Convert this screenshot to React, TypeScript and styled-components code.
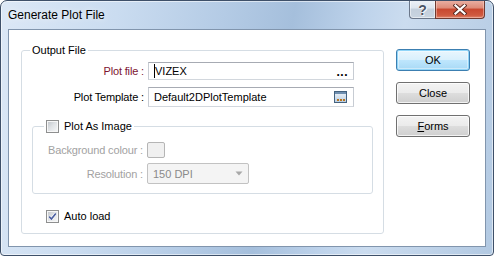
import React from "react";
import styled, { createGlobalStyle, css } from "styled-components";

const Global = createGlobalStyle`
  html, body { margin: 0; padding: 0; background: #ffffff; }
  body { font-family: "Liberation Sans", Arial, sans-serif; font-size: 11px; color: #000; }
  * { box-sizing: border-box; }
`;

const Window = styled.div`
  width: 494px;
  height: 256px;
  border: 1px solid #3e5069;
  border-radius: 7px 7px 4px 4px;
  background: linear-gradient(100deg, #dce8f6 0%, #cadcf0 22%, #b4cbe5 42%, #a5bfdc 55%, #bed3eb 68%, #cbdcef 76%, #b2c9e2 100%);
  box-shadow: inset 0 0 0 1px rgba(255, 255, 255, 0.55);
  display: flex;
  flex-direction: column;
  overflow: hidden;
`;

const TitleBar = styled.div`
  height: 28px;
  flex: none;
  display: flex;
  align-items: flex-start;
  padding: 0 8px 0 7px;
`;

const TitleText = styled.div`
  flex: 1;
  margin-top: 7px;
  font-size: 12px;
  line-height: 14px;
  color: #000;
  text-shadow: 0 0 6px rgba(255, 255, 255, 0.9);
`;

const CaptionButtons = styled.div`
  display: flex;
  height: 19px;
  margin-top: -1px;
`;

const CaptionButton = styled.div<{ $kind: "help" | "close" }>`
  height: 19px;
  display: flex;
  align-items: center;
  justify-content: center;
  border: 1px solid;
  border-top: none;
  ${(p) =>
    p.$kind === "help"
      ? css`
          width: 26px;
          border-color: #6b778a;
          border-right: none;
          border-radius: 0 0 0 4px;
          background: linear-gradient(to bottom, #eef2f7 0%, #dde5ee 45%, #c3cfdc 50%, #c9d4e0 100%);
          box-shadow: inset 0 0 0 1px rgba(255, 255, 255, 0.5);
        `
      : css`
          width: 50px;
          border-color: #6e3a31;
          border-radius: 0 0 4px 0;
          background: linear-gradient(to bottom, #eab2a6 0%, #dd8a77 45%, #c8472f 50%, #cf5a40 85%, #e0866d 100%);
          box-shadow: inset 0 0 0 1px rgba(255, 220, 210, 0.45);
        `}
`;

const HelpGlyph = styled.span`
  font-family: "Liberation Sans", Arial, sans-serif;
  font-weight: bold;
  font-size: 14px;
  line-height: 14px;
  color: #4b5565;
  text-shadow: 0 0 1px #fff, 0 0 1px #fff, 1px 1px 0 rgba(255, 255, 255, 0.8);
  margin-top: 1px;
`;

const Client = styled.div`
  flex: 1;
  margin: 0 7px 8px 7px;
  background: #ffffff;
  border: 1px solid #8195ad;
  display: flex;
  align-items: flex-start;
  padding: 13px 0 0 12px;
`;

const Group = styled.fieldset<{ $w: number; $h: number }>`
  margin: 0;
  padding: 0;
  min-width: 0;
  width: ${(p) => p.$w}px;
  height: ${(p) => p.$h}px;
  border: 1px solid #d5dde4;
  border-radius: 3px;
  flex: none;
`;

const Legend = styled.legend<{ $offset: number }>`
  margin-left: ${(p) => p.$offset}px;
  padding: 0 2px;
  height: 15px;
`;

const LegendInner = styled.span`
  display: flex;
  align-items: center;
  gap: 5px;
  height: 15px;
  line-height: 15px;
  font-size: 11px;
  color: #000;
`;

const GroupBody = styled.div<{ $pt: number }>`
  display: flex;
  flex-direction: column;
  padding-top: ${(p) => p.$pt}px;
`;

const Row = styled.div<{ $label: number; $gapTop?: number }>`
  display: grid;
  grid-template-columns: ${(p) => p.$label}px auto;
  column-gap: 4px;
  align-items: center;
  margin-top: ${(p) => p.$gapTop ?? 0}px;
`;

const Label = styled.span<{ $tone?: "normal" | "accent" | "disabled" }>`
  text-align: right;
  white-space: nowrap;
  font-size: 11px;
  letter-spacing: -0.15px;
  color: ${(p) => (p.$tone === "accent" ? "#7d1530" : p.$tone === "disabled" ? "#a2a2a2" : "#000")};
`;

const TextBox = styled.div<{ $h: number }>`
  width: 206px;
  height: ${(p) => p.$h}px;
  border: 1px solid #abb0b8;
  border-color: #a7abb3 #c7ccd3 #d2d7dd #c7ccd3;
  display: flex;
  align-items: center;
  padding: 0 4px 0 5px;
  font-size: 11px;
  color: #000;
  background: #fff;
`;

const Value = styled.span`
  flex: 1;
  display: flex;
  align-items: center;
  white-space: nowrap;
`;

const Caret = styled.span`
  display: inline-block;
  width: 1px;
  height: 14px;
  background: #000;
`;

const Ellipsis = styled.span`
  font-weight: bold;
  font-size: 12px;
  line-height: 12px;
  letter-spacing: 0.5px;
  margin-top: 2px;
  margin-right: 1px;
`;

const Swatch = styled.div`
  width: 18px;
  height: 16px;
  border: 1px solid #b5b5b5;
  border-radius: 2px;
  background: #f0f0f0;
`;

const Combo = styled.div`
  width: 102px;
  height: 21px;
  border: 1px solid #c2c2c2;
  border-radius: 2px;
  background: #f4f4f4;
  display: flex;
  align-items: center;
  justify-content: space-between;
  padding: 0 5px 0 5px;
  font-size: 11px;
  color: #8a8a8a;
`;

const SubGroupWrap = styled.div`
  margin: 12px 0 0 10px;
`;

const CheckRow = styled.label`
  display: flex;
  align-items: center;
  gap: 5px;
  margin: 16px 0 0 24px;
  font-size: 11px;
  line-height: 13px;
  color: #000;
`;

const CheckBox = styled.span`
  width: 13px;
  height: 13px;
  flex: none;
  border: 1px solid #8e8f8f;
  padding: 1px;
  background: linear-gradient(135deg, #c4c8cd 0%, #dfe2e5 45%, #f4f5f6 100%) content-box, #f7f7f7;
  display: flex;
  align-items: center;
  justify-content: center;
`;

const ButtonColumn = styled.div`
  display: flex;
  flex-direction: column;
  gap: 11px;
  margin: 6px 0 0 12px;
`;

const Button = styled.div<{ $default?: boolean }>`
  width: 74px;
  height: 22px;
  border: 1px solid #707070;
  border-radius: 3px;
  display: flex;
  align-items: center;
  justify-content: center;
  font-size: 11px;
  color: #000;
  background: linear-gradient(to bottom, #f3f3f3 0%, #ebebeb 48%, #dddddd 52%, #cfcfcf 100%);
  box-shadow: inset 0 0 0 1px rgba(255, 255, 255, 0.75);
  ${(p) =>
    p.$default &&
    css`
      border-color: #3c7fb1;
      background: linear-gradient(to bottom, #eaf6fd 0%, #d9f0fc 48%, #bee6fd 52%, #a7d9f5 100%);
      box-shadow: inset 0 0 0 1px #90d5f8, inset 0 0 0 2px rgba(255, 255, 255, 0.4);
    `}
`;

const Underline = styled.span`
  text-decoration: underline;
`;

function Check() {
  return (
    <svg width="9" height="9" viewBox="0 0 9 9">
      <path d="M1.2 4.6 L3.4 7 L7.8 1.4" fill="none" stroke="#ffffff" strokeWidth="2.6" strokeLinejoin="round" />
      <path d="M1.2 4.6 L3.4 7 L7.8 1.4" fill="none" stroke="#4a5ea0" strokeWidth="1.6" />
    </svg>
  );
}

function BrowseIcon() {
  return (
    <svg width="13" height="12" viewBox="0 0 13 12" style={{ marginRight: 2 }}>
      <defs>
        <linearGradient id="bi" x1="0" y1="0" x2="0" y2="1">
          <stop offset="0" stopColor="#f2f6fa" />
          <stop offset="1" stopColor="#b7cde3" />
        </linearGradient>
      </defs>
      <rect x="0.5" y="0.5" width="12" height="11" fill="url(#bi)" stroke="#44627f" />
      <rect x="1" y="1" width="11" height="2" fill="#6f8fb0" />
      <rect x="3" y="8" width="2" height="2" fill="#b8741e" />
      <rect x="6" y="8" width="2" height="2" fill="#b8741e" />
      <rect x="9" y="8" width="2" height="2" fill="#b8741e" />
    </svg>
  );
}

function CloseGlyph() {
  return (
    <svg width="14" height="11" viewBox="0 0 14 11">
      <path d="M2.5 1.5 L11.5 9.5 M11.5 1.5 L2.5 9.5" stroke="#5a2a22" strokeWidth="4" strokeLinecap="square" />
      <path d="M2.5 1.5 L11.5 9.5 M11.5 1.5 L2.5 9.5" stroke="#ffffff" strokeWidth="2.2" strokeLinecap="square" />
    </svg>
  );
}

function ComboArrow() {
  return (
    <svg width="8" height="5" viewBox="0 0 8 5">
      <path d="M0.5 0.5 L7.5 0.5 L4 4.5 Z" fill="#a8a8a8" />
    </svg>
  );
}

export default function App() {
  return (
    <>
      <Global />
      <Window>
        <TitleBar>
          <TitleText>Generate Plot File</TitleText>
          <CaptionButtons>
            <CaptionButton $kind="help">
              <HelpGlyph>?</HelpGlyph>
            </CaptionButton>
            <CaptionButton $kind="close">
              <CloseGlyph />
            </CaptionButton>
          </CaptionButtons>
        </TitleBar>
        <Client>
          <Group $w={363} $h={191}>
            <Legend $offset={8}>
              <LegendInner>Output File</LegendInner>
            </Legend>
            <GroupBody $pt={4}>
              <Row $label={122}>
                <Label $tone="accent">Plot file :</Label>
                <TextBox $h={18}>
                  <Value>
                    <Caret />
                    VIZEX
                  </Value>
                  <Ellipsis>...</Ellipsis>
                </TextBox>
              </Row>
              <Row $label={122} $gapTop={7}>
                <Label>Plot Template :</Label>
                <TextBox $h={20}>
                  <Value>Default2DPlotTemplate</Value>
                  <BrowseIcon />
                </TextBox>
              </Row>
              <SubGroupWrap>
                <Group $w={341} $h={75}>
                  <Legend $offset={11}>
                    <LegendInner>
                      <CheckBox />
                      Plot As Image
                    </LegendInner>
                  </Legend>
                  <GroupBody $pt={8}>
                    <Row $label={110}>
                      <Label $tone="disabled">Background colour :</Label>
                      <Swatch />
                    </Row>
                    <Row $label={110} $gapTop={5}>
                      <Label $tone="disabled">Resolution :</Label>
                      <Combo>
                        150 DPI
                        <ComboArrow />
                      </Combo>
                    </Row>
                  </GroupBody>
                </Group>
              </SubGroupWrap>
              <CheckRow>
                <CheckBox>
                  <Check />
                </CheckBox>
                Auto load
              </CheckRow>
            </GroupBody>
          </Group>
          <ButtonColumn>
            <Button $default>OK</Button>
            <Button>Close</Button>
            <Button>
              <Underline>F</Underline>orms
            </Button>
          </ButtonColumn>
        </Client>
      </Window>
    </>
  );
}
